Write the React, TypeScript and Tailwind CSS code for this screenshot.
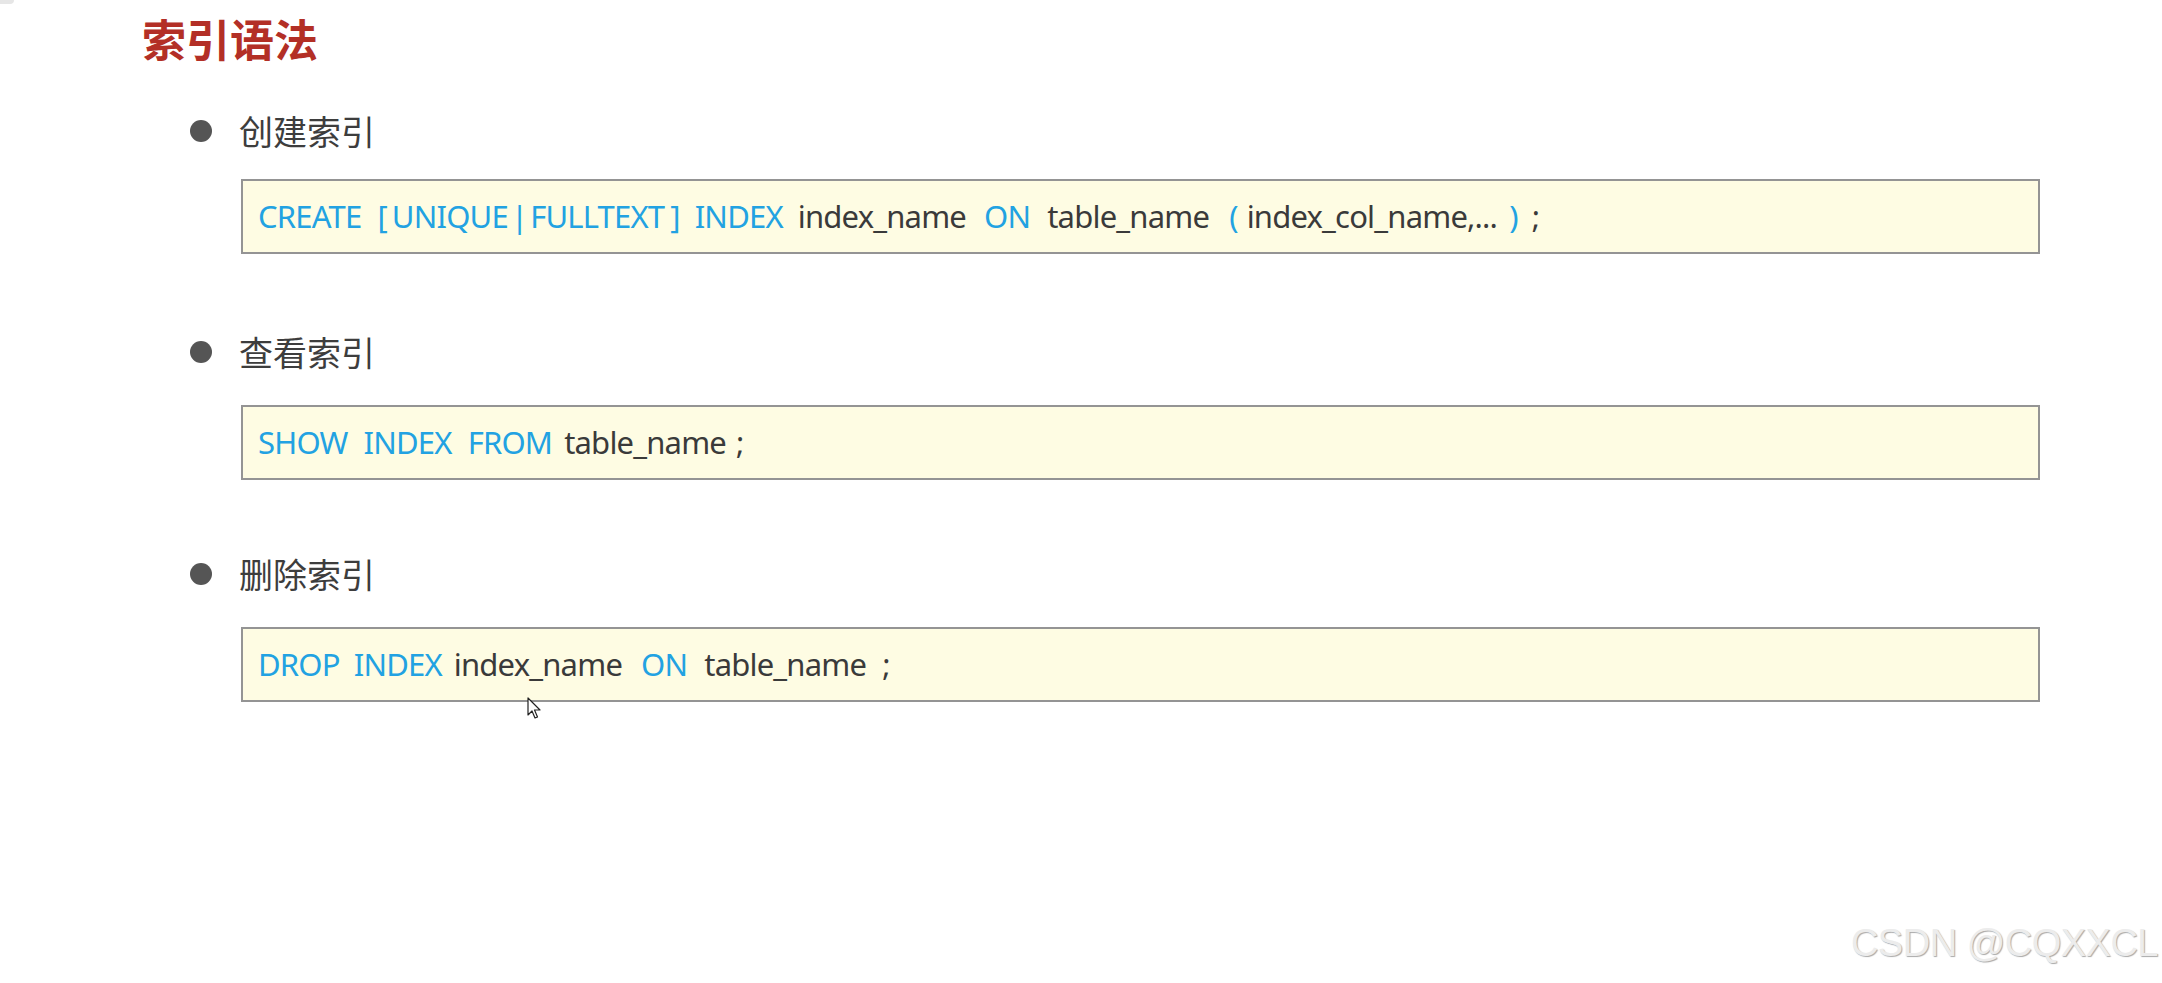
import React from "react";

type Tok = { t: string; blue?: boolean; ml: string };

const createToks: Tok[] = [
  { t: "CREATE", blue: true, ml: "ml-0" },
  { t: "[", blue: true, ml: "ml-[16px]" },
  { t: "UNIQUE", blue: true, ml: "ml-[5px]" },
  { t: "|", blue: true, ml: "ml-[3px]" },
  { t: "FULLTEXT", blue: true, ml: "ml-[3px]" },
  { t: "]", blue: true, ml: "ml-[6px]" },
  { t: "INDEX", blue: true, ml: "ml-[15px]" },
  { t: "index_name", ml: "ml-[15px]" },
  { t: "ON", blue: true, ml: "ml-[18px]" },
  { t: "table_name", ml: "ml-[17px]" },
  { t: "(", blue: true, ml: "ml-[20px]" },
  { t: "index_col_name,...", ml: "ml-[9px]" },
  { t: ")", blue: true, ml: "ml-[12px]" },
  { t: ";", ml: "ml-[14px]" },
];

const showToks: Tok[] = [
  { t: "SHOW", blue: true, ml: "ml-0" },
  { t: "INDEX", blue: true, ml: "ml-[16px]" },
  { t: "FROM", blue: true, ml: "ml-[16px]" },
  { t: "table_name", ml: "ml-[12px]" },
  { t: ";", ml: "ml-[10px]" },
];

const dropToks: Tok[] = [
  { t: "DROP", blue: true, ml: "ml-0" },
  { t: "INDEX", blue: true, ml: "ml-[14px]" },
  { t: "index_name", ml: "ml-[12px]" },
  { t: "ON", blue: true, ml: "ml-[19px]" },
  { t: "table_name", ml: "ml-[17px]" },
  { t: ";", ml: "ml-[16px]" },
];

function Bullet({ label, className }: { label: string; className: string }) {
  return (
    <div className={"flex items-center h-[48px] pl-[190px] " + className}>
      <span className="w-[22px] h-[22px] rounded-full bg-[#555555] shrink-0" />
      <span className="ml-[27px] text-[34px] leading-[48px] text-[#3d3d3d] font-['Noto_Sans_CJK_SC',sans-serif]">
        {label}
      </span>
    </div>
  );
}

function CodeBox({ toks, className }: { toks: Tok[]; className: string }) {
  return (
    <div className={"ml-[241px] w-[1799px] h-[75px] border-2 border-[#949494] bg-[#fefce3] flex items-center pl-[15px] " + className}>
      <div className="flex items-center text-[31px] leading-none tracking-[-0.8px] font-['Noto_Sans',sans-serif] whitespace-pre">
        {toks.map((k, i) => (
          <span key={i} className={(k.blue ? "text-[#22a2e2] " : "text-[#3a3a3a] ") + k.ml}>
            {k.t}
          </span>
        ))}
      </div>
    </div>
  );
}

export default function App() {
  return (
    <div className="relative w-full h-[983px] bg-white overflow-hidden">
      <div className="absolute left-0 top-0 w-[14px] h-[4px] bg-[#e6e6e6] rounded-br" />
      <div className="pt-[14px]">
        <h1 className="pl-[142px] text-[44px] leading-[48px] font-bold text-[#b32f26] font-['Noto_Sans_CJK_SC',sans-serif]">
          索引语法
        </h1>
        <Bullet label="创建索引" className="mt-[45px]" />
        <CodeBox toks={createToks} className="mt-[24px]" />
        <Bullet label="查看索引" className="mt-[74px]" />
        <CodeBox toks={showToks} className="mt-[29px]" />
        <Bullet label="删除索引" className="mt-[70px]" />
        <CodeBox toks={dropToks} className="mt-[29px]" />
      </div>

      <svg
        className="absolute left-[527px] top-[697px]"
        width="16"
        height="24"
        viewBox="0 0 16 24"
      >
        <path
          d="M1 1 L1 18 L5 14 L8 21 L10.5 20 L7.5 13 L13 13 Z"
          fill="#ffffff"
          stroke="#222222"
          strokeWidth="1.2"
          strokeLinejoin="round"
        />
      </svg>

      <div className="absolute right-[4px] top-[924px] text-[38px] leading-none tracking-[-0.5px] text-[#ececec] font-['Liberation_Sans',Arial,sans-serif] [text-shadow:1px_1px_1px_#a9a9a9]">
        CSDN @CQXXCL
      </div>
    </div>
  );
}
